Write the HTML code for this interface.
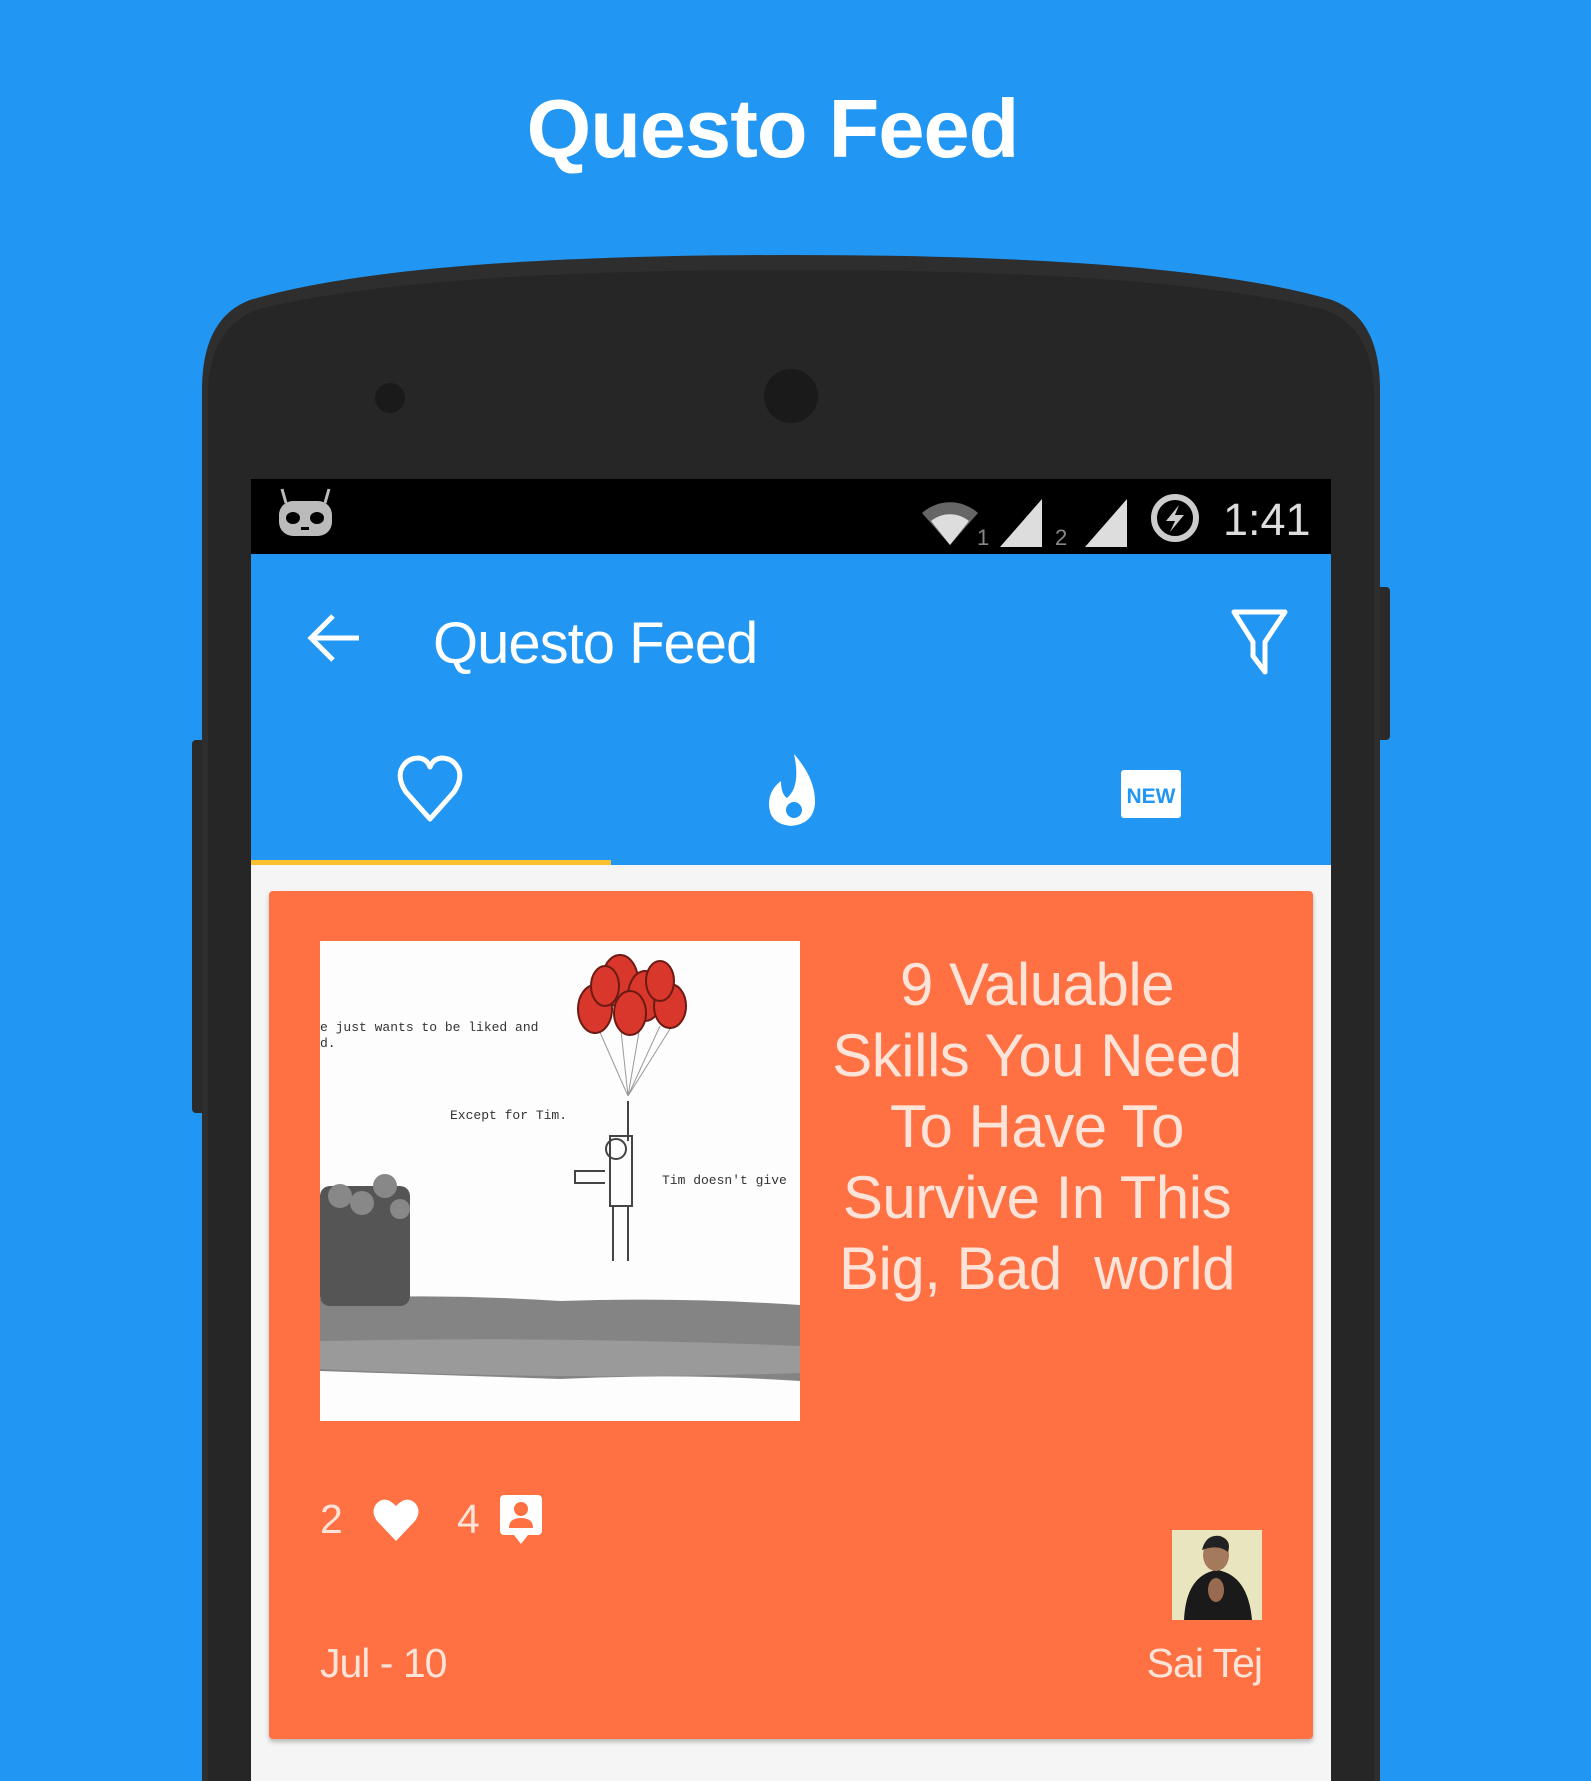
<!DOCTYPE html>
<html><head><meta charset="utf-8"><style>
*{margin:0;padding:0;box-sizing:border-box}
body{width:1591px;height:1781px;background:#2196f3;position:relative;overflow:hidden;font-family:"Liberation Sans",sans-serif}
.a{position:absolute}
</style></head><body>
<div class="a" style="left:0;top:74px;width:1545px;text-align:center;color:#fff;font-weight:bold;font-size:83px;line-height:110px;letter-spacing:-1px">Questo Feed</div>
<svg class="a" style="left:0;top:0" width="1591" height="1781">
<rect x="192" y="740" width="14" height="373" rx="4" fill="#2a2a2a"/>
<rect x="1376" y="587" width="14" height="153" rx="4" fill="#2a2a2a"/>
<path d="M202,1781 L202,390 Q202,318 250,300 Q400,255 791,255 Q1180,255 1332,300 Q1380,318 1380,390 L1380,1781 Z" fill="#2e2e2e"/>
<path d="M208,1781 L208,395 Q208,330 256,310 Q410,270 791,270 Q1170,270 1326,310 Q1374,330 1374,395 L1374,1781 Z" fill="#262626"/>
<ellipse cx="390" cy="398" rx="15" ry="15" fill="#1a1a1a"/>
<ellipse cx="791" cy="396" rx="27" ry="27" fill="#1a1a1a"/>
</svg>
<div class="a" style="left:251px;top:479px;width:1080px;height:1302px;background:#f5f5f5"></div>
<div class="a" style="left:251px;top:479px;width:1080px;height:75px;background:#000"></div>
<svg class="a" style="left:251px;top:479px" width="1080" height="75">
<g stroke="#bbb" stroke-width="3"><path d="M31,10 L35,24 M78,10 L74,24"/></g>
<rect x="28" y="22" width="53" height="35" rx="14" fill="#bbb"/>
<ellipse cx="42" cy="39" rx="7" ry="6" fill="#000"/><ellipse cx="66" cy="39" rx="7" ry="6" fill="#000"/>
<rect x="50" y="48" width="8" height="3" fill="#000"/>
<path d="M671,34 a42,42 0 0 1 56,0 l-28,32z" fill="#666"/>
<path d="M680,42 a30,30 0 0 1 38,0 l-19,24z" fill="#ddd"/>
<text x="726" y="66" font-size="22" fill="#888" font-family="Liberation Sans">1</text>
<path d="M749,68 L791,20 V68Z" fill="#ddd"/>
<text x="804" y="66" font-size="22" fill="#888" font-family="Liberation Sans">2</text>
<path d="M834,68 L876,20 V68Z" fill="#ddd"/>
<circle cx="924" cy="39" r="21" fill="none" stroke="#ccc" stroke-width="6"/>
<path d="M928,26 L915,42 H924 L919,53 L933,36 H924Z" fill="#ccc"/>
<text x="972" y="56" font-size="45" fill="#ddd" font-family="Liberation Sans">1:41</text>
</svg>
<div class="a" style="left:251px;top:554px;width:1080px;height:311px;background:#2196f3"></div>
<div class="a" style="left:251px;top:860px;width:360px;height:5px;background:#fbc02d"></div>
<svg class="a" style="left:251px;top:554px" width="1080" height="311">
<path d="M108,84 H62 M82,62 L60,84 L82,106" stroke="#fff" stroke-width="5" fill="none"/>
<path d="M983,58 H1034 L1014,88 V118 L1002,102 V88Z" stroke="#fff" stroke-width="5" fill="none" stroke-linejoin="round"/>
<path d="M179,265 L155,238 Q147,226 150,216 Q155,204 168,204 Q176,205 179,213 Q182,205 190,204 Q203,204 208,216 Q211,226 203,238Z" stroke="#fff" stroke-width="5" fill="none" stroke-linejoin="round"/>
<path d="M543,200 Q565,225 564,250 Q562,270 540,272 Q518,270 518,250 Q518,236 530,227 Q530,240 536,244 Q550,232 543,200Z" fill="#fff"/>
<circle cx="543" cy="256" r="8" fill="#2196f3"/>
<rect x="870" y="216" width="60" height="48" rx="3" fill="#fff"/>
<text x="900" y="249" font-size="21" font-weight="bold" fill="#2196f3" text-anchor="middle" font-family="Liberation Sans">NEW</text>
</svg>
<div class="a" style="top:614px;font-size:58px;color:#fff;left:433px;line-height:60px;letter-spacing:-1px">Questo Feed</div>
<div class="a" style="left:269px;top:891px;width:1044px;height:848px;background:#ff7043;border-radius:4px;box-shadow:0 3px 5px rgba(0,0,0,0.25)"></div>
<svg class="a" style="left:320px;top:941px" width="480" height="480">
<rect width="480" height="480" fill="#fdfdfd"/>
<path d="M0,358 Q120,352 240,360 Q360,356 480,364 V440 Q360,432 240,438 Q120,434 0,430Z" fill="#6e6e6e" opacity="0.85"/>
<path d="M0,400 Q240,395 480,405 V432 Q240,440 0,428Z" fill="#9a9a9a"/>
<g stroke="#999" stroke-width="1"><path d="M308,155 L275,80 M308,155 L300,80 M308,155 L320,85 M308,155 L340,85 M308,155 L355,80"/></g>
<g fill="#d9372c" stroke="#6b1a14" stroke-width="2">
<ellipse cx="275" cy="68" rx="17" ry="24"/><ellipse cx="300" cy="40" rx="18" ry="26"/><ellipse cx="325" cy="55" rx="17" ry="25"/><ellipse cx="350" cy="65" rx="16" ry="22"/><ellipse cx="310" cy="72" rx="16" ry="22"/><ellipse cx="285" cy="45" rx="14" ry="20"/><ellipse cx="340" cy="40" rx="14" ry="20"/>
</g>
<g stroke="#444" stroke-width="2" fill="none"><path d="M308,160 V200 M290,195 H312 V265 H290Z M285,230 H255 V242 H285 M293,265 V320 M308,265 V320"/><circle cx="296" cy="208" r="10"/></g>
<g fill="#555"><rect x="0" y="245" width="90" height="120" rx="10"/></g>
<g fill="#888"><circle cx="20" cy="255" r="12"/><circle cx="42" cy="262" r="12"/><circle cx="65" cy="245" r="12"/><circle cx="80" cy="268" r="10"/></g>
<g font-family="Liberation Mono" font-size="13" fill="#333"><text x="0" y="90">e just wants to be liked and</text><text x="0" y="106">d.</text><text x="130" y="178">Except for Tim.</text><text x="342" y="243">Tim doesn't give</text></g>
</svg>
<div class="a" style="left:787px;top:949px;width:500px;text-align:center;color:#fde3d8;font-size:60px;line-height:71px;letter-spacing:-0.5px">9 Valuable<br>Skills You Need<br>To Have To<br>Survive In This<br>Big, Bad&nbsp; world</div>
<div class="a" style="left:320px;top:1496px;color:#fde3d8;font-size:41px;line-height:46px">2</div>
<svg class="a" style="left:372px;top:1497px" width="48" height="46"><path d="M24,44 L5,24 Q-2,14 5,6 Q14,-2 24,9 Q34,-2 43,6 Q50,14 43,24Z" fill="#fff"/></svg>
<div class="a" style="left:457px;top:1496px;color:#fde3d8;font-size:41px;line-height:46px">4</div>
<svg class="a" style="left:500px;top:1495px" width="44" height="50"><rect width="42" height="40" rx="4" fill="#fff"/><path d="M14,40 L21,49 L28,40Z" fill="#fff"/><circle cx="21" cy="14" r="7" fill="#ff7043"/><path d="M9,33 Q9,23 21,23 Q33,23 33,33Z" fill="#ff7043"/></svg>
<svg class="a" style="left:1172px;top:1530px" width="90" height="90"><rect width="90" height="90" fill="#e9e6bf"/><path d="M12,90 Q14,45 45,40 Q76,45 80,90Z" fill="#1a1a1a"/><ellipse cx="44" cy="25" rx="13" ry="16" fill="#a57a5c"/><path d="M30,20 Q34,4 48,6 Q60,10 56,22 Q46,14 30,20Z" fill="#222"/><ellipse cx="44" cy="60" rx="8" ry="12" fill="#9a6a50"/></svg>
<div class="a" style="left:320px;top:1640px;color:#fde3d8;font-size:41px;line-height:46px;letter-spacing:-1px">Jul - 10</div>
<div class="a" style="left:1062px;top:1640px;width:200px;text-align:right;color:#fde3d8;font-size:41px;line-height:46px;letter-spacing:-1px">Sai Tej</div>
</body></html>
